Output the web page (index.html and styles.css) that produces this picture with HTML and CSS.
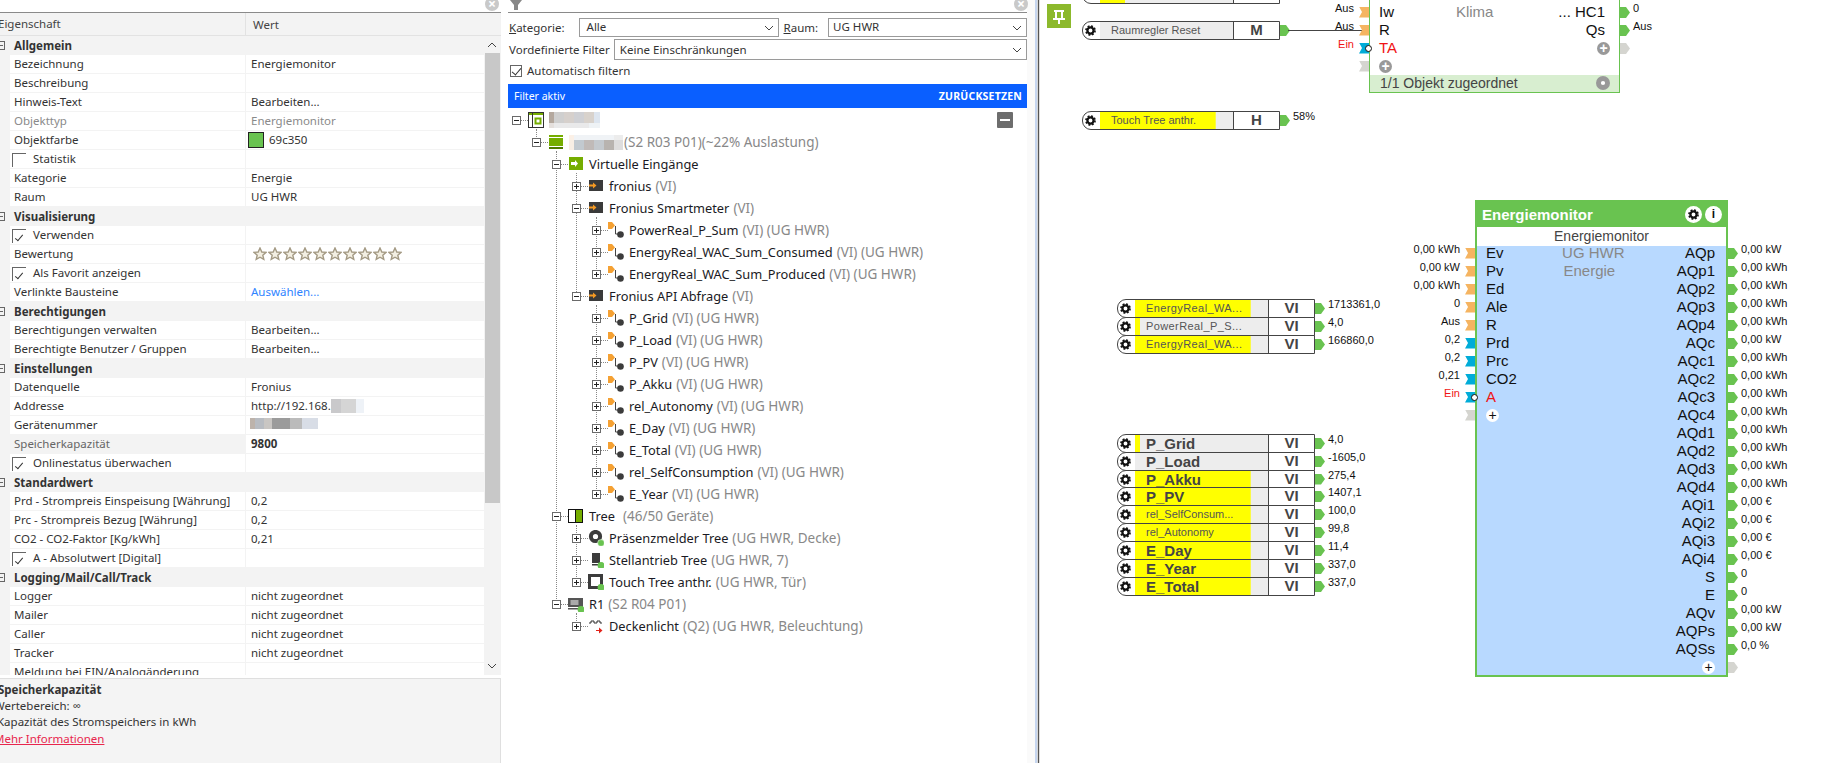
FILE: index.html
```html
<!DOCTYPE html>
<html lang="de">
<head>
    <meta charset="UTF-8">
    <meta name="viewport" content="width=device-width, initial-scale=1.0">
    <title>Energiemonitor</title>
    <link rel="stylesheet" href="styles.css">
</head>
<body>
    <svg class="defs" width="0" height="0">
        <symbol id="gear" viewBox="0 0 16 16">
            <circle cx="8" cy="8" r="3.8" fill="none" stroke="currentColor" stroke-width="2.8"/>
            <circle cx="8" cy="8" r="5.6" fill="none" stroke="currentColor" stroke-width="2" stroke-dasharray="2.4 2"/>
        </symbol>
        <symbol id="star" viewBox="0 0 14 14">
            <path d="M7 1l1.8 4 4.2.4-3.2 2.8 1 4.2L7 10.2 3.2 12.4l1-4.2L1 5.4 5.2 5z" fill="#f3efe2" stroke="#a49a84" stroke-width="1.4"/>
        </symbol>
        <symbol id="i-root" viewBox="0 0 16 16">
            <rect x=".5" y=".5" width="15" height="15" fill="#fff" stroke="#333"/>
            <rect x="1" y="1" width="14" height="2" fill="#75ad00"/>
            <rect x="4" y="1" width="1" height="14" fill="#333"/>
            <rect x="7.5" y="6.5" width="5" height="5" fill="none" stroke="#75ad00" stroke-width="2"/>
        </symbol>
        <symbol id="i-server" viewBox="0 0 16 16">
            <rect x="1" y="1" width="14" height="2" fill="#75ad00"/>
            <rect x="1" y="4" width="14" height="8" fill="#75ad00"/>
            <rect x="1" y="13" width="14" height="2" fill="#4f7a00"/>
        </symbol>
        <symbol id="i-vinput" viewBox="0 0 16 16">
            <rect x="1" y="1" width="14" height="13" fill="#75ad00"/>
            <path d="M3 6h4V4l3 3.5-3 3.5V9H3z" fill="#fff"/>
        </symbol>
        <symbol id="i-vi" viewBox="0 0 16 16">
            <rect x="1" y="2" width="14" height="11" fill="#3a3a3a"/>
            <path d="M1 6.5h4V4.500l3.500 3-3.500 3v-2H1z" fill="#f59a23"/>
        </symbol>
        <symbol id="i-input" viewBox="0 0 16 16">
            <path d="M0 0h4l3 3.500-3 3.500H0z" fill="#f5a133"/>
            <path d="M7.500 4v8h3" fill="none" stroke="#444" stroke-width="1"/>
            <circle cx="12.500" cy="12.500" r="3.300" fill="#3c3c3c"/>
        </symbol>
        <symbol id="i-tree" viewBox="0 0 16 16">
            <rect x=".5" y="1.5" width="14" height="13" fill="#fff" stroke="#111"/>
            <rect x="8" y="2" width="6" height="12" fill="#75ad00"/>
            <rect x="7" y="2" width="1" height="12" fill="#111"/>
        </symbol>
        <symbol id="i-pm" viewBox="0 0 16 16">
            <circle cx="7.500" cy="6.500" r="4.600" fill="none" stroke="#3c3c3c" stroke-width="4"/>
            <circle cx="13" cy="13" r="3.400" fill="#69c350" stroke="#fff" stroke-width=".5"/>
        </symbol>
        <symbol id="i-drive" viewBox="0 0 16 16">
            <rect x="4" y="1" width="8" height="10" fill="#3c3c3c"/>
            <rect x="4" y="12" width="6" height="1.5" fill="#3c3c3c"/>
            <circle cx="13" cy="13.500" r="3.400" fill="#69c350"/>
        </symbol>
        <symbol id="i-touch" viewBox="0 0 16 16">
            <rect x="1.5" y="1.5" width="12" height="12" fill="none" stroke="#3c3c3c" stroke-width="3"/>
            <circle cx="13" cy="13.500" r="3.400" fill="#69c350"/>
        </symbol>
        <symbol id="i-relay" viewBox="0 0 16 16">
            <rect x="0" y="2" width="15" height="9" fill="#555"/>
            <rect x="0" y="12" width="15" height="1.5" fill="#555"/>
            <rect x="2.5" y="4" width="8" height="5" fill="#aaa"/>
            <circle cx="13" cy="13.500" r="3.400" fill="#69c350"/>
        </symbol>
        <symbol id="i-light" viewBox="0 0 16 16">
            <path d="M1 5h2V3h3v2h3V3h3v2h2" fill="none" stroke="#333" stroke-width="1"/>
            <path d="M8 12h3V9.500l3.500 3-3.500 3V13H8z" fill="#e2231a"/>
        </symbol>
        <symbol id="chev" viewBox="0 0 10 6">
            <path d="M1 1l4 4 4-4" fill="none" stroke="#444" stroke-width="1"/>
        </symbol>
    </svg>

    <div class="app">
        <!-- Eigenschaften -->
        <aside class="props">
            <div class="search"><span class="clear">&times;</span></div>
            <div class="props-head">
                <span class="head-name">Eigenschaft</span>
                <span class="head-value">Wert</span>
            </div>
            <div class="props-main">
                <div class="props-list">
                    <div class="cat"><span class="cat-exp"></span><b>Allgemein</b></div>
                    <div class="row"><span class="n">Bezeichnung</span><span class="v">Energiemonitor</span></div>
                    <div class="row"><span class="n">Beschreibung</span><span class="v"></span></div>
                    <div class="row"><span class="n">Hinweis-Text</span><span class="v">Bearbeiten...</span></div>
                    <div class="row muted"><span class="n">Objekttyp</span><span class="v">Energiemonitor</span></div>
                    <div class="row"><span class="n">Objektfarbe</span><span class="v"><i class="swatch"></i>69c350</span></div>
                    <div class="row"><span class="n"><i class="chk"></i>Statistik</span><span class="v"></span></div>
                    <div class="row"><span class="n">Kategorie</span><span class="v">Energie</span></div>
                    <div class="row"><span class="n">Raum</span><span class="v">UG HWR</span></div>
                    <div class="cat"><span class="cat-exp"></span><b>Visualisierung</b></div>
                    <div class="row"><span class="n"><i class="chk on"></i>Verwenden</span><span class="v"></span></div>
                    <div class="row"><span class="n">Bewertung</span><span class="v stars">
                        <svg><use href="#star"/></svg><svg><use href="#star"/></svg><svg><use href="#star"/></svg><svg><use href="#star"/></svg><svg><use href="#star"/></svg><svg><use href="#star"/></svg><svg><use href="#star"/></svg><svg><use href="#star"/></svg><svg><use href="#star"/></svg><svg><use href="#star"/></svg>
                    </span></div>
                    <div class="row"><span class="n"><i class="chk on"></i>Als Favorit anzeigen</span><span class="v"></span></div>
                    <div class="row"><span class="n">Verlinkte Bausteine</span><span class="v link">Auswählen...</span></div>
                    <div class="cat"><span class="cat-exp"></span><b>Berechtigungen</b></div>
                    <div class="row"><span class="n">Berechtigungen verwalten</span><span class="v">Bearbeiten...</span></div>
                    <div class="row"><span class="n">Berechtigte Benutzer / Gruppen</span><span class="v">Bearbeiten...</span></div>
                    <div class="cat"><span class="cat-exp"></span><b>Einstellungen</b></div>
                    <div class="row"><span class="n">Datenquelle</span><span class="v">Fronius</span></div>
                    <div class="row"><span class="n">Addresse</span><span class="v">http://192.168.<i class="blur blur-ip"></i></span></div>
                    <div class="row"><span class="n">Gerätenummer</span><span class="v"><i class="blur blur-sn"></i></span></div>
                    <div class="row selected"><span class="n">Speicherkapazität</span><span class="v">9800</span></div>
                    <div class="row"><span class="n"><i class="chk on"></i>Onlinestatus überwachen</span><span class="v"></span></div>
                    <div class="cat"><span class="cat-exp"></span><b>Standardwert</b></div>
                    <div class="row"><span class="n">Prd - Strompreis Einspeisung [Währung]</span><span class="v">0,2</span></div>
                    <div class="row"><span class="n">Prc - Strompreis Bezug [Währung]</span><span class="v">0,2</span></div>
                    <div class="row"><span class="n">CO2 - CO2-Faktor [Kg/kWh]</span><span class="v">0,21</span></div>
                    <div class="row"><span class="n"><i class="chk on"></i>A - Absolutwert [Digital]</span><span class="v"></span></div>
                    <div class="cat"><span class="cat-exp"></span><b>Logging/Mail/Call/Track</b></div>
                    <div class="row"><span class="n">Logger</span><span class="v">nicht zugeordnet</span></div>
                    <div class="row"><span class="n">Mailer</span><span class="v">nicht zugeordnet</span></div>
                    <div class="row"><span class="n">Caller</span><span class="v">nicht zugeordnet</span></div>
                    <div class="row"><span class="n">Tracker</span><span class="v">nicht zugeordnet</span></div>
                    <div class="row"><span class="n">Meldung bei EIN/Analogänderung</span><span class="v"></span></div>
                </div>
                <div class="scroll">
                    <svg class="scroll-up"><use href="#chev"/></svg>
                    <div class="scroll-thumb"></div>
                    <svg class="scroll-down"><use href="#chev"/></svg>
                </div>
            </div>
            <div class="help">
                <b>Speicherkapazität</b>
                <span class="help-range">Wertebereich: ∞</span>
                <span class="help-text">Kapazität des Stromspeichers in kWh</span>
                <a class="help-link">Mehr Informationen</a>
            </div>
        </aside>

        <!-- Periphery tree -->
        <section class="mid">
            <div class="search">
                <svg class="funnel" viewBox="0 0 12 10" width="12" height="10"><path d="M0 0h12L8 5v5H4V5z" fill="#888"/></svg>
                <span class="clear">&times;</span>
            </div>
            <div class="filter-line">
                <label class="lbl"><u>K</u>ategorie:</label>
                <div class="combo combo-cat">Alle<svg><use href="#chev"/></svg></div>
                <label class="lbl lbl-room"><u>R</u>aum:</label>
                <div class="combo combo-room">UG HWR<svg><use href="#chev"/></svg></div>
            </div>
            <div class="filter-line filter-line2">
                <label class="lbl">Vordefinierte Filter</label>
                <div class="combo combo-pre">Keine Einschränkungen<svg><use href="#chev"/></svg></div>
            </div>
            <div class="auto"><i class="auto-box"></i>Automatisch filtern</div>
            <div class="filter-bar"><span>Filter aktiv</span><b>ZURÜCKSETZEN</b></div>
            <div class="tree">
                <i class="guide g1"></i><i class="guide g2"></i><i class="guide g3"></i><i class="guide g4"></i><i class="guide g5"></i><i class="guide g6"></i><i class="guide g7"></i>
                <span class="collapse-all"></span>

                <div class="t lv0"><span class="exp"></span><span class="dots"></span><svg class="ico"><use href="#i-root"/></svg><i class="blur blur-root"></i></div>
                <div class="t lv1"><span class="exp"></span><span class="dots"></span><svg class="ico"><use href="#i-server"/></svg><i class="blur blur-srv"></i><span class="sfx">(S2 R03 P01)(~22% Auslastung)</span></div>
                <div class="t lv2"><span class="exp"></span><span class="dots"></span><svg class="ico"><use href="#i-vinput"/></svg><span class="nm">Virtuelle Eingänge</span></div>
                <div class="t lv3"><span class="exp plus"></span><span class="dots"></span><svg class="ico"><use href="#i-vi"/></svg><span class="nm">fronius</span><span class="sfx">(VI)</span></div>
                <div class="t lv3"><span class="exp"></span><span class="dots"></span><svg class="ico"><use href="#i-vi"/></svg><span class="nm">Fronius Smartmeter</span><span class="sfx">(VI)</span></div>
                <div class="t lv4"><span class="exp plus"></span><span class="dots"></span><svg class="ico"><use href="#i-input"/></svg><span class="nm">PowerReal_P_Sum</span><span class="sfx">(VI) (UG HWR)</span></div>
                <div class="t lv4"><span class="exp plus"></span><span class="dots"></span><svg class="ico"><use href="#i-input"/></svg><span class="nm">EnergyReal_WAC_Sum_Consumed</span><span class="sfx">(VI) (UG HWR)</span></div>
                <div class="t lv4"><span class="exp plus"></span><span class="dots"></span><svg class="ico"><use href="#i-input"/></svg><span class="nm">EnergyReal_WAC_Sum_Produced</span><span class="sfx">(VI) (UG HWR)</span></div>
                <div class="t lv3"><span class="exp"></span><span class="dots"></span><svg class="ico"><use href="#i-vi"/></svg><span class="nm">Fronius API Abfrage</span><span class="sfx">(VI)</span></div>
                <div class="t lv4"><span class="exp plus"></span><span class="dots"></span><svg class="ico"><use href="#i-input"/></svg><span class="nm">P_Grid</span><span class="sfx">(VI) (UG HWR)</span></div>
                <div class="t lv4"><span class="exp plus"></span><span class="dots"></span><svg class="ico"><use href="#i-input"/></svg><span class="nm">P_Load</span><span class="sfx">(VI) (UG HWR)</span></div>
                <div class="t lv4"><span class="exp plus"></span><span class="dots"></span><svg class="ico"><use href="#i-input"/></svg><span class="nm">P_PV</span><span class="sfx">(VI) (UG HWR)</span></div>
                <div class="t lv4"><span class="exp plus"></span><span class="dots"></span><svg class="ico"><use href="#i-input"/></svg><span class="nm">P_Akku</span><span class="sfx">(VI) (UG HWR)</span></div>
                <div class="t lv4"><span class="exp plus"></span><span class="dots"></span><svg class="ico"><use href="#i-input"/></svg><span class="nm">rel_Autonomy</span><span class="sfx">(VI) (UG HWR)</span></div>
                <div class="t lv4"><span class="exp plus"></span><span class="dots"></span><svg class="ico"><use href="#i-input"/></svg><span class="nm">E_Day</span><span class="sfx">(VI) (UG HWR)</span></div>
                <div class="t lv4"><span class="exp plus"></span><span class="dots"></span><svg class="ico"><use href="#i-input"/></svg><span class="nm">E_Total</span><span class="sfx">(VI) (UG HWR)</span></div>
                <div class="t lv4"><span class="exp plus"></span><span class="dots"></span><svg class="ico"><use href="#i-input"/></svg><span class="nm">rel_SelfConsumption</span><span class="sfx">(VI) (UG HWR)</span></div>
                <div class="t lv4"><span class="exp plus"></span><span class="dots"></span><svg class="ico"><use href="#i-input"/></svg><span class="nm">E_Year</span><span class="sfx">(VI) (UG HWR)</span></div>
                <div class="t lv2"><span class="exp"></span><span class="dots"></span><svg class="ico"><use href="#i-tree"/></svg><span class="nm">Tree</span><span class="sfx sfx-wide">(46/50 Geräte)</span></div>
                <div class="t lv3"><span class="exp plus"></span><span class="dots"></span><svg class="ico"><use href="#i-pm"/></svg><span class="nm">Präsenzmelder Tree</span><span class="sfx">(UG HWR, Decke)</span></div>
                <div class="t lv3"><span class="exp plus"></span><span class="dots"></span><svg class="ico"><use href="#i-drive"/></svg><span class="nm">Stellantrieb Tree</span><span class="sfx">(UG HWR, 7)</span></div>
                <div class="t lv3"><span class="exp plus"></span><span class="dots"></span><svg class="ico"><use href="#i-touch"/></svg><span class="nm">Touch Tree anthr.</span><span class="sfx">(UG HWR, Tür)</span></div>
                <div class="t lv2"><span class="exp"></span><span class="dots"></span><svg class="ico"><use href="#i-relay"/></svg><span class="nm">R1</span><span class="sfx">(S2 R04 P01)</span></div>
                <div class="t lv3"><span class="exp plus"></span><span class="dots"></span><svg class="ico"><use href="#i-light"/></svg><span class="nm">Deckenlicht</span><span class="sfx">(Q2) (UG HWR, Beleuchtung)</span></div>
            </div>
        </section>

        <div class="mid-edge"></div>
        <div class="splitter"></div>

        <!-- Programmier-Seite: freie Zeichenflaeche -->
        <main class="canvas">
            <div class="pin"><svg viewBox="0 0 24 24" width="24" height="24"><path d="M7 6h10v2h-1v6h2v2h-5v4h-2v-4H6v-2h2V8H7zm3 2v6h4V8z" fill="#fff"/></svg></div>

            <div class="vgroup at-top">
                <div class="vnode"><div class="vbox"><span class="cap"><svg><use href="#gear"/></svg></span><span class="label" style="background-size:19% 100%"></span><span class="kind">M</span></div></div>
            </div>
            <div class="vgroup at-reset">
                <div class="vnode"><div class="vbox"><span class="cap"><svg><use href="#gear"/></svg></span><span class="label">Raumregler Reset</span><span class="kind">M</span></div><i class="tag-out"></i></div>
            </div>
            <div class="wire"></div>
            <div class="vgroup at-touch">
                <div class="vnode"><div class="vbox"><span class="cap"><svg><use href="#gear"/></svg></span><span class="label" style="background-size:87% 100%">Touch Tree anthr.</span><span class="kind">H</span></div><i class="tag-out"></i><span class="val">58%</span></div>
            </div>

            <div class="vgroup at-group1">
                <div class="vnode"><div class="vbox"><span class="cap"><svg><use href="#gear"/></svg></span><span class="label wide" style="background-size:87% 100%">EnergyReal_WA...</span><span class="kind">VI</span></div><i class="tag-out"></i><span class="val">1713361,0</span></div>
                <div class="vnode"><div class="vbox"><span class="cap"><svg><use href="#gear"/></svg></span><span class="label wide" style="background-size:4% 100%">PowerReal_P_S...</span><span class="kind">VI</span></div><i class="tag-out"></i><span class="val">4,0</span></div>
                <div class="vnode"><div class="vbox"><span class="cap"><svg><use href="#gear"/></svg></span><span class="label wide" style="background-size:87% 100%">EnergyReal_WA...</span><span class="kind">VI</span></div><i class="tag-out"></i><span class="val">166860,0</span></div>
            </div>

            <div class="vgroup at-group2">
                <div class="vnode"><div class="vbox"><span class="cap"><svg><use href="#gear"/></svg></span><span class="label big" style="background-size:4% 100%">P_Grid</span><span class="kind">VI</span></div><i class="tag-out"></i><span class="val">4,0</span></div>
                <div class="vnode"><div class="vbox"><span class="cap"><svg><use href="#gear"/></svg></span><span class="label big">P_Load</span><span class="kind">VI</span></div><i class="tag-out"></i><span class="val">-1605,0</span></div>
                <div class="vnode short"><div class="vbox"><span class="cap"><svg><use href="#gear"/></svg></span><span class="label big" style="background-size:87% 100%">P_Akku</span><span class="kind">VI</span></div><i class="tag-out"></i><span class="val">275,4</span></div>
                <div class="vnode"><div class="vbox"><span class="cap"><svg><use href="#gear"/></svg></span><span class="label big" style="background-size:87% 100%">P_PV</span><span class="kind">VI</span></div><i class="tag-out"></i><span class="val">1407,1</span></div>
                <div class="vnode"><div class="vbox"><span class="cap"><svg><use href="#gear"/></svg></span><span class="label" style="background-size:87% 100%">rel_SelfConsum...</span><span class="kind">VI</span></div><i class="tag-out"></i><span class="val">100,0</span></div>
                <div class="vnode"><div class="vbox"><span class="cap"><svg><use href="#gear"/></svg></span><span class="label" style="background-size:87% 100%">rel_Autonomy</span><span class="kind">VI</span></div><i class="tag-out"></i><span class="val">99,8</span></div>
                <div class="vnode"><div class="vbox"><span class="cap"><svg><use href="#gear"/></svg></span><span class="label big" style="background-size:87% 100%">E_Day</span><span class="kind">VI</span></div><i class="tag-out"></i><span class="val">11,4</span></div>
                <div class="vnode"><div class="vbox"><span class="cap"><svg><use href="#gear"/></svg></span><span class="label big" style="background-size:87% 100%">E_Year</span><span class="kind">VI</span></div><i class="tag-out"></i><span class="val">337,0</span></div>
                <div class="vnode"><div class="vbox"><span class="cap"><svg><use href="#gear"/></svg></span><span class="label big" style="background-size:87% 100%">E_Total</span><span class="kind">VI</span></div><i class="tag-out"></i><span class="val">337,0</span></div>
            </div>

            <!-- Klima Baustein -->
            <div class="fb fb-klima">
                <div class="ports-in">
                    <div class="pin-row"><span class="val">Aus</span><i class="tag-in orange"></i></div>
                    <div class="pin-row"><span class="val">Aus</span><i class="tag-in orange"></i></div>
                    <div class="pin-row"><span class="val red">Ein</span><i class="tag-in blue"><i class="ring"></i></i></div>
                    <div class="pin-row"><i class="tag-in grey"></i></div>
                </div>
                <div class="box klima-box">
                    <div class="box-rows">
                        <div class="names">
                            <span>Iw</span><span>R</span><span class="red">TA</span><span><i class="add grey">+</i></span>
                        </div>
                        <div class="center klima-center"><span>Klima</span></div>
                        <div class="names right">
                            <span>... HC1</span><span>Qs</span><span><i class="add grey">+</i></span>
                        </div>
                    </div>
                    <div class="klima-foot">1/1 Objekt zugeordnet<span class="foot-gear"><svg><use href="#gear"/></svg></span></div>
                </div>
                <div class="ports-out">
                    <div class="pout-row"><i class="tag-out"></i><span class="val">0</span></div>
                    <div class="pout-row"><i class="tag-out"></i><span class="val">Aus</span></div>
                    <div class="pout-row"><i class="tag-out off"></i></div>
                </div>
            </div>

            <!-- Energiemonitor Baustein -->
            <div class="fb fb-mon">
                <div class="ports-in">
                    <div class="pin-row"><span class="val">0,00 kWh</span><i class="tag-in orange"></i></div>
                    <div class="pin-row"><span class="val">0,00 kW</span><i class="tag-in orange"></i></div>
                    <div class="pin-row"><span class="val">0,00 kWh</span><i class="tag-in orange"></i></div>
                    <div class="pin-row"><span class="val">0</span><i class="tag-in orange"></i></div>
                    <div class="pin-row"><span class="val">Aus</span><i class="tag-in orange"></i></div>
                    <div class="pin-row"><span class="val">0,2</span><i class="tag-in blue"></i></div>
                    <div class="pin-row"><span class="val">0,2</span><i class="tag-in blue"></i></div>
                    <div class="pin-row"><span class="val">0,21</span><i class="tag-in blue"></i></div>
                    <div class="pin-row"><span class="val red">Ein</span><i class="tag-in blue"><i class="ring"></i></i></div>
                    <div class="pin-row"><i class="tag-in grey"></i></div>
                </div>
                <div class="box mon-box">
                    <div class="mon-head">
                        <span class="mon-title">Energiemonitor</span>
                        <span class="round"><svg><use href="#gear"/></svg></span>
                        <span class="round info">i</span>
                    </div>
                    <div class="mon-sub">Energiemonitor</div>
                    <div class="box-rows mon-rows">
                        <div class="names">
                            <span>Ev</span><span>Pv</span><span>Ed</span><span>Ale</span><span>R</span><span>Prd</span><span>Prc</span><span>CO2</span><span class="red">A</span><span><i class="add">+</i></span>
                        </div>
                        <div class="center mon-center"><span>UG HWR</span><span class="mon-cat">Energie</span></div>
                        <div class="names right">
                            <span>AQp</span><span>AQp1</span><span>AQp2</span><span>AQp3</span><span>AQp4</span><span>AQc</span><span>AQc1</span><span>AQc2</span><span>AQc3</span><span>AQc4</span><span>AQd1</span><span>AQd2</span><span>AQd3</span><span>AQd4</span><span>AQi1</span><span>AQi2</span><span>AQi3</span><span>AQi4</span><span>S</span><span>E</span><span>AQv</span><span>AQPs</span><span>AQSs</span><span><i class="add">+</i></span>
                        </div>
                    </div>
                </div>
                <div class="ports-out">
                    <div class="pout-row"><i class="tag-out"></i><span class="val">0,00 kW</span></div>
                    <div class="pout-row"><i class="tag-out"></i><span class="val">0,00 kWh</span></div>
                    <div class="pout-row"><i class="tag-out"></i><span class="val">0,00 kWh</span></div>
                    <div class="pout-row"><i class="tag-out"></i><span class="val">0,00 kWh</span></div>
                    <div class="pout-row"><i class="tag-out"></i><span class="val">0,00 kWh</span></div>
                    <div class="pout-row"><i class="tag-out"></i><span class="val">0,00 kW</span></div>
                    <div class="pout-row"><i class="tag-out"></i><span class="val">0,00 kWh</span></div>
                    <div class="pout-row"><i class="tag-out"></i><span class="val">0,00 kWh</span></div>
                    <div class="pout-row"><i class="tag-out"></i><span class="val">0,00 kWh</span></div>
                    <div class="pout-row"><i class="tag-out"></i><span class="val">0,00 kWh</span></div>
                    <div class="pout-row"><i class="tag-out"></i><span class="val">0,00 kWh</span></div>
                    <div class="pout-row"><i class="tag-out"></i><span class="val">0,00 kWh</span></div>
                    <div class="pout-row"><i class="tag-out"></i><span class="val">0,00 kWh</span></div>
                    <div class="pout-row"><i class="tag-out"></i><span class="val">0,00 kWh</span></div>
                    <div class="pout-row"><i class="tag-out"></i><span class="val">0,00 €</span></div>
                    <div class="pout-row"><i class="tag-out"></i><span class="val">0,00 €</span></div>
                    <div class="pout-row"><i class="tag-out"></i><span class="val">0,00 €</span></div>
                    <div class="pout-row"><i class="tag-out"></i><span class="val">0,00 €</span></div>
                    <div class="pout-row"><i class="tag-out"></i><span class="val">0</span></div>
                    <div class="pout-row"><i class="tag-out"></i><span class="val">0</span></div>
                    <div class="pout-row"><i class="tag-out"></i><span class="val">0,00 kW</span></div>
                    <div class="pout-row"><i class="tag-out"></i><span class="val">0,00 kW</span></div>
                    <div class="pout-row"><i class="tag-out"></i><span class="val">0,0 %</span></div>
                    <div class="pout-row"><i class="tag-out off"></i></div>
                </div>
            </div>
        </main>
    </div>
</body>
</html>
```

FILE: styles.css
```css
* {
    box-sizing: border-box;
}
html, body {
    margin: 0;
    padding: 0;
    height: 763px;
    overflow: hidden;
    background-color: #ffffff;
}
body {
    font-family: 'Noto Sans', 'Open Sans', sans-serif;
    font-size: 11.5px;
    color: #333333;
}
.defs {
    position: absolute;
}
.app {
    display: flex;
    height: 763px;
}

/* shared search line */
.search {
    height: 13px;
    border-bottom: 1px solid #8a8a8a;
    position: relative;
    background-color: #ffffff;
}
.clear {
    position: absolute;
    right: 2px;
    top: -3px;
    width: 14px;
    height: 14px;
    border-radius: 50%;
    background-color: #c9c9c9;
    color: #ffffff;
    font-size: 14px;
    line-height: 13px;
    text-align: center;
    font-weight: bold;
}

/* properties panel */
.props {
    width: 501px;
    flex: none;
    display: flex;
    flex-direction: column;
    height: 763px;
    overflow: hidden;
}
.props-head {
    height: 23px;
    background-color: #f3f3f3;
    border-bottom: 1px solid #e2e2e2;
    display: flex;
    align-items: center;
    font-size: 11.5px;
    color: #444;
}
.head-name {
    width: 248px;
    margin-left: -2px;
    height: 100%;
    line-height: 22px;
    border-right: 1px solid #e2e2e2;
    flex: none;
    padding-left: 0;
}
.head-value {
    padding-left: 7px;
}
.props-main {
    display: flex;
    height: 639px;
    background-color: #f3f3f3;
    flex: none;
}
.props-list {
    width: 484px;
    flex: none;
    overflow: hidden;
    padding-left: 10px;
}
.cat {
    height: 19px;
    line-height: 19px;
    background-color: #f3f3f3;
    padding-left: 4px;
    position: relative;
    color: #333;
}
.cat-exp {
    position: absolute;
    left: -13px;
    top: 5px;
    width: 8px;
    height: 9px;
    border: 1px solid #666;
    background: linear-gradient(#666, #666) no-repeat 2px 3px / 3px 1px;
}
.row {
    display: flex;
    height: 19px;
    line-height: 18px;
    background-color: #ffffff;
    border-bottom: 1px solid #f3f3f3;
    color: #333;
}
.n {
    width: 236px;
    flex: none;
    padding-left: 4px;
    white-space: nowrap;
    overflow: hidden;
    display: flex;
    align-items: center;
    border-right: 1px solid #f3f3f3;
}
.v {
    flex: 1;
    padding-left: 5px;
    display: flex;
    align-items: center;
    white-space: nowrap;
}
.muted {
    color: #8a8a8a;
}
.link {
    color: #2f84ff;
}
.selected .n {
    background-color: #f3f3f3;
    color: #666;
}
.selected .v {
    font-weight: bold;
}
.swatch {
    width: 16px;
    height: 16px;
    background-color: #69c350;
    border: 1px solid #222;
    margin-left: -3px;
    margin-right: 5px;
}
.chk {
    width: 14px;
    height: 14px;
    flex: none;
    border-left: 1px solid #666;
    border-top: 1px solid #666;
    margin-left: -2px;
    margin-right: 7px;
    margin-top: 1px;
    position: relative;
}
.chk.on::after {
    content: "";
    position: absolute;
    left: 4px;
    top: 3px;
    width: 3px;
    height: 7px;
    border-right: 1px solid #333;
    border-bottom: 1px solid #333;
    transform: rotate(40deg);
}
.stars {
    gap: 1px;
    padding-left: 7px;
}
.stars svg {
    width: 14px;
    height: 14px;
    flex: none;
}
.blur {
    display: inline-block;
    flex: none;
}
.blur-ip {
    width: 33px;
    height: 14px;
    background: linear-gradient(90deg, #c9c9cb 0 10px, #d5d5d5 10px 25px, #eef2f7 25px 33px);
}
.blur-sn {
    width: 68px;
    height: 11px;
    margin-left: -1px;
    margin-top: -4px;
    background: linear-gradient(90deg, #bdb3ab 0 5px, #b8bcc2 5px 14px, #c9c6c3 14px 22px, #9b9b9b 22px 40px, #bbb 40px 52px, #d8dde6 52px 68px);
}
.scroll {
    width: 17px;
    flex: none;
    position: relative;
    background-color: #f3f3f3;
}
.scroll svg {
    width: 10px;
    height: 6px;
    position: absolute;
    left: 3px;
}
.scroll-up {
    top: 6px;
    transform: rotate(180deg);
}
.scroll-down {
    bottom: 6px;
}
.scroll-thumb {
    position: absolute;
    left: 1px;
    top: 17px;
    width: 15px;
    height: 450px;
    background-color: #c8c8c8;
}
.help {
    flex: 1;
    margin-top: 3px;
    border-top: 1px solid #dfdfdf;
    border-right: 1px solid #dfdfdf;
    background-color: #f4f4f4;
    padding-top: 3px;
    display: flex;
    flex-direction: column;
    color: #333;
    line-height: 16px;
}
.help b {
    margin-left: -2px;
}
.help-range {
    margin-left: -6px;
}
.help-text {
    margin-left: -3px;
}
.help-link {
    margin-left: -6px;
    margin-top: 1px;
    color: #e8264d;
    text-decoration: underline;
}

/* middle panel */
.mid {
    width: 519px;
    margin-left: 7px;
    flex: none;
    position: relative;
}
.funnel {
    position: absolute;
    left: 2px;
    top: 0;
}
.mid .clear {
    right: -1px;
}
.filter-line {
    display: flex;
    align-items: center;
    margin-top: 5px;
    height: 19px;
}
.filter-line2 {
    margin-top: 2px;
    height: 21px;
}
.lbl {
    padding-left: 1px;
    color: #333;
    flex: none;
}
.combo {
    height: 100%;
    border: 1px solid #9a9a9a;
    padding-left: 7px;
    line-height: 16px;
    color: #333;
    position: relative;
    flex: none;
}
.combo svg {
    position: absolute;
    right: 4px;
    top: 6px;
    width: 10px;
    height: 6px;
}
.combo-cat {
    margin-left: 14px;
    width: 200px;
}
.lbl-room {
    margin-left: 4px;
}
.combo-room {
    margin-left: 10px;
    flex: 1;
    padding-left: 4px;
}
.combo-pre {
    margin-left: 4px;
    flex: 1;
    line-height: 19px;
    padding-left: 5px;
}
.combo-pre svg {
    top: 7px;
}
.auto {
    display: flex;
    align-items: center;
    height: 13px;
    margin-top: 4px;
    padding-left: 2px;
    color: #333;
}
.auto-box {
    width: 12px;
    height: 12px;
    border: 1px solid #666;
    margin-right: 5px;
    position: relative;
}
.auto-box::after {
    content: "";
    position: absolute;
    left: 3px;
    top: 0;
    width: 4px;
    height: 8px;
    border-right: 1px solid #333;
    border-bottom: 1px solid #333;
    transform: rotate(40deg);
}
.filter-bar {
    margin-top: 7px;
    height: 24px;
    background-color: #0a5fff;
    color: #ffffff;
    font-size: 10.5px;
    display: flex;
    justify-content: space-between;
    align-items: center;
    padding: 0 5px 0 6px;
}
.filter-bar b {
    letter-spacing: 0.2px;
}

/* tree */
.tree {
    position: relative;
    margin-top: 1px;
    font-size: 13.5px;
}
.t {
    display: flex;
    align-items: center;
    height: 22px;
    white-space: nowrap;
}
.lv0 { padding-left: 4px; }
.lv1 { padding-left: 24px; }
.lv2 { padding-left: 44px; }
.lv3 { padding-left: 64px; }
.lv4 { padding-left: 84px; }
.exp {
    width: 9px;
    height: 9px;
    flex: none;
    border: 1px solid #6a6a6a;
    background: #fff linear-gradient(#222, #222) no-repeat 1px 3px / 5px 1px;
    position: relative;
    z-index: 1;
}
.exp.plus::after {
    content: "";
    position: absolute;
    left: 3px;
    top: 1px;
    width: 1px;
    height: 5px;
    background-color: #222;
}
.dots {
    width: 7px;
    border-top: 1px dotted #888;
    flex: none;
}
.ico {
    width: 16px;
    height: 16px;
    flex: none;
    margin-right: 5px;
}
.nm {
    color: #1a1a24;
    font-size: 12.8px;
}
.sfx {
    color: #888;
    margin-left: 4px;
}
.sfx-wide {
    margin-left: 8px;
}
.blur-root {
    width: 51px;
    height: 16px;
    background:
        linear-gradient(90deg, #e4dfdc 0 5px, #e9e9ea 5px 40px, #eef2f5 40px 51px) bottom / 100% 5px no-repeat,
        linear-gradient(90deg, #b4a89e 0 5px, #cfcfcf 5px 15px, #d6d0cc 15px 25px, #cfd0d4 25px 35px, #d8d2cc 35px 45px, #dde5ef 45px 51px);
}
.blur-srv {
    width: 54px;
    height: 15px;
    background:
        linear-gradient(90deg, #fbf0e6 0 5px, #f0f3f6 5px 45px, #ececec 45px 54px) top / 100% 5px no-repeat,
        linear-gradient(90deg, #f8eee4 0 5px, #c2c9cf 5px 15px, #c0bab8 15px 25px, #c4c9ce 25px 35px, #b8b3af 35px 45px, #dedddd 45px 54px);
}
.t .blur-srv + .sfx {
    margin-left: 1px;
}
.guide {
    position: absolute;
    border-left: 1px dotted #888;
}
.g1 { left: 28px; top: 20px; height: 8px; }
.g2 { left: 48px; top: 42px; height: 452px; }
.g3 { left: 68px; top: 64px; height: 123px; }
.g4 { left: 88px; top: 108px; height: 56px; }
.g5 { left: 88px; top: 196px; height: 188px; }
.g6 { left: 68px; top: 416px; height: 56px; }
.g7 { left: 68px; top: 504px; height: 12px; }
.collapse-all {
    position: absolute;
    right: 14px;
    top: 3px;
    width: 16px;
    height: 16px;
    border-radius: 1px;
    background: #6d6d6d linear-gradient(#fff, #fff) no-repeat 3px 7px / 10px 2px;
}

/* gutter + splitter */
.mid-edge {
    width: 8px;
    flex: none;
    background-color: #fafafa;
}
.splitter {
    width: 5px;
    flex: none;
    background: linear-gradient(90deg, #c6d6f0 0 2px, #d6d6d6 2px 3px, #555 3px 4px, #ddd 4px 5px);
}

/* canvas */
.canvas {
    flex: 1;
    position: relative;
    overflow: hidden;
    font-family: 'Liberation Sans', Arial, sans-serif;
    background-color: #ffffff;
}
.pin {
    position: absolute;
    left: 7px;
    top: 4px;
    width: 24px;
    height: 24px;
    background-color: #8cb92c;
}
.vgroup {
    position: absolute;
    display: flex;
    flex-direction: column;
}
.at-top { left: 42px; top: -15px; }
.at-reset { left: 42px; top: 21px; }
.at-touch { left: 42px; top: 111px; }
.at-group1 { left: 77px; top: 299px; }
.at-group2 { left: 77px; top: 434px; }
.vnode {
    display: flex;
    align-items: center;
    height: 18px;
}
.vnode.short {
    height: 17px;
}
.vbox {
    width: 198px;
    height: 19px;
    margin-top: 1px;
    display: flex;
    border: 1px solid #444;
    border-radius: 9px 0 0 9px;
    flex: none;
    background-color: #ffffff;
}
.short .vbox {
    height: 18px;
}
.cap {
    width: 17px;
    flex: none;
    display: flex;
    align-items: center;
    padding-left: 1px;
    color: #111;
}
.cap svg {
    width: 13px;
    height: 13px;
}
.label {
    width: 134px;
    flex: none;
    padding-left: 11px;
    background: #ededed linear-gradient(#ffff00, #ffff00) no-repeat 0 0 / 0 100%;
    border-right: 1px solid #444;
    font-size: 11px;
    line-height: 17px;
    color: #555;
    white-space: nowrap;
    overflow: hidden;
}
.label.wide {
    letter-spacing: 0.4px;
}
.label.big {
    font-size: 15px;
    font-weight: bold;
    color: #444;
}
.kind {
    flex: 1;
    text-align: center;
    font-size: 15px;
    font-weight: bold;
    line-height: 16px;
    color: #444;
}
.tag-out {
    width: 10px;
    height: 11px;
    flex: none;
    margin-top: 1px;
    background-color: #69c350;
    clip-path: polygon(0 0, 60% 0, 100% 50%, 60% 100%, 0 100%);
}
.tag-out.off {
    background-color: #d5d5d0;
}
.val {
    font-size: 11px;
    line-height: 12px;
    color: #111;
    margin-bottom: 8px;
    margin-left: 3px;
    white-space: nowrap;
}
.red {
    color: #f01414;
}
.wire {
    position: absolute;
    left: 248px;
    top: 30px;
    width: 76px;
    height: 1px;
    background-color: #444;
}

/* function blocks */
.fb {
    position: absolute;
    display: flex;
    align-items: flex-start;
}
.ports-in,
.ports-out {
    width: 90px;
    flex: none;
    display: flex;
    flex-direction: column;
}
.pin-row,
.pout-row {
    height: 18px;
    display: flex;
    align-items: center;
}
.pin-row {
    justify-content: flex-end;
}
.pin-row .val {
    margin: 0 5px 8px 0;
}
.tag-in {
    width: 10px;
    height: 11px;
    flex: none;
    position: relative;
}
.tag-in::before {
    content: "";
    position: absolute;
    inset: 0;
    clip-path: polygon(0 0, 100% 0, 100% 100%, 0 100%, 30% 50%);
    background-color: inherit;
}
.orange::before { background-color: #f5b461; }
.blue::before { background-color: #00acd8; }
.grey::before { background-color: #d5d5d0; }
.ring {
    position: absolute;
    right: -3px;
    top: 2px;
    width: 7px;
    height: 7px;
    border: 1.5px solid #111;
    border-radius: 50%;
    background-color: #fff;
}
.box {
    flex: none;
    border: 1px solid #69c350;
    background-color: #ffffff;
}
.box-rows {
    display: flex;
    justify-content: space-between;
    font-size: 15px;
    color: #111;
}
.names {
    display: flex;
    flex-direction: column;
    padding-left: 9px;
}
.names span {
    height: 18px;
    line-height: 18px;
    display: flex;
    align-items: center;
}
.names.right {
    padding: 0 11px 0 0;
    align-items: flex-end;
}
.center {
    flex: 1;
    display: flex;
    flex-direction: column;
    align-items: center;
    color: #888;
    font-size: 15px;
}
.center span {
    height: 18px;
    line-height: 18px;
}
.add {
    width: 13px;
    height: 13px;
    border-radius: 50%;
    background-color: #ffffff;
    color: #111;
    font-style: normal;
    font-size: 14px;
    line-height: 12px;
    text-align: center;
}
.add.grey {
    background-color: #999;
    color: #fff;
    font-weight: bold;
}
.add.grey::before {
    content: none;
}

.fb-klima {
    left: 239px;
    top: -20px;
}
.fb-klima .ports-in,
.fb-klima .ports-out {
    padding-top: 23px;
    width: 90px;
}
.klima-box {
    width: 251px;
    height: 113px;
    display: flex;
    flex-direction: column;
    justify-content: flex-end;
}
.klima-box .box-rows {
    flex: 1;
    padding-top: 22px;
}
.klima-box .names.right {
    padding-right: 14px;
}
.klima-box .names.right .add {
    margin-right: -5px;
}
.klima-center {
    padding-right: 6px;
}
.klima-foot {
    height: 17px;
    background-color: #d8eed0;
    font-size: 14px;
    line-height: 17px;
    padding-left: 10px;
    color: #444;
    position: relative;
}
.foot-gear {
    position: absolute;
    right: 9px;
    top: 1px;
    width: 14px;
    height: 14px;
    border-radius: 50%;
    color: #999;
    background: radial-gradient(circle, #fff 0 3px, #999 3.5px);
}
.foot-gear svg {
    width: 14px;
    height: 14px;
}

.fb-mon {
    left: 345px;
    top: 200px;
}
.fb-mon .ports-in,
.fb-mon .ports-out {
    padding-top: 44px;
}
.mon-box {
    width: 253px;
    height: 477px;
    border-width: 2px;
    border-color: #69c350;
    background-color: #b8d9ff;
}
.mon-head {
    height: 26px;
    margin-top: -1px;
    background-color: #69c350;
    color: #ffffff;
    display: flex;
    align-items: center;
    padding: 0 4px 0 5px;
    gap: 3px;
}
.mon-title {
    flex: 1;
    font-size: 15px;
    font-weight: bold;
}
.round {
    width: 17px;
    height: 17px;
    border-radius: 50%;
    background-color: #ffffff;
    color: #111;
    display: flex;
    align-items: center;
    justify-content: center;
    font-size: 12px;
    font-weight: bold;
}
.round svg {
    width: 13px;
    height: 13px;
}
.mon-sub {
    height: 19px;
    background-color: #ffffff;
    text-align: center;
    font-size: 14px;
    line-height: 18px;
    color: #444;
}
.mon-rows {
    margin-top: -2px;
}
.mon-center {
    padding-right: 6px;
}
.mon-cat {
    margin-right: 8px;
}
```
